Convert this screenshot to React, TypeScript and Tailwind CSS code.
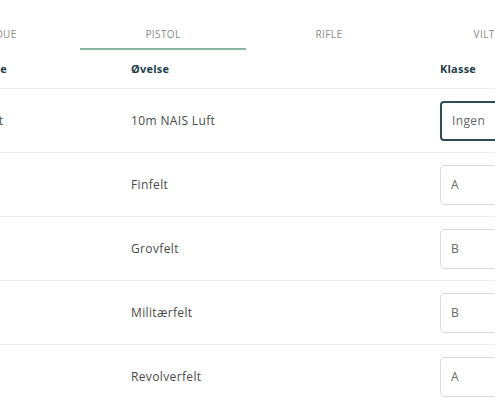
import React from 'react';

const tabs = ['Lerdue', 'Pistol', 'Rifle', 'Viltmål'];

const rows = [
  { group: 'Luft', name: '10m NAIS Luft', klasse: 'Ingen', focused: true },
  { group: '', name: 'Finfelt', klasse: 'A' },
  { group: '', name: 'Grovfelt', klasse: 'B' },
  { group: '', name: 'Militærfelt', klasse: 'B' },
  { group: '', name: 'Revolverfelt', klasse: 'A' },
];

export default function App() {
  return (
    <div className="w-[495px] h-[400px] overflow-hidden bg-white font-['Open_Sans',sans-serif]">
      <div className="-ml-[86px] w-[664px]">
        {/* Tabs */}
        <div className="grid grid-cols-4">
          {tabs.map((tab) => (
            <div
              key={tab}
              className={`pt-[28px] pb-[8px] text-center text-[10px] leading-[12px] uppercase tracking-[0.04em] text-[#8a8a8a] border-b-2 ${
                tab === 'Pistol' ? 'border-[#86b5a2]' : 'border-transparent'
              }`}
            >
              {tab}
            </div>
          ))}
        </div>

        {/* Table header */}
        <div className="grid grid-cols-[66px_151px_309px_1fr] h-[39px] items-center border-b border-[#ececec] text-[11px] font-bold text-[#1f3e4e] tracking-[0.02em]">
          <div />
          <div>Type</div>
          <div>Øvelse</div>
          <div>Klasse</div>
        </div>

        {/* Rows */}
        {rows.map((row) => (
          <div
            key={row.name}
            className="grid grid-cols-[66px_151px_309px_1fr] h-[64px] items-center border-b border-[#ececec] text-[12px] tracking-[0.03em] text-[#4a4a4a]"
          >
            <div />
            <div>{row.group}</div>
            <div>{row.name}</div>
            <div>
              <div
                className={`w-[120px] h-[40px] rounded-[4px] flex items-center pl-[10px] text-[12px] text-[#666] ${
                  row.focused ? 'border-2 border-[#2d4c56]' : 'border border-[#dcdcdc]'
                }`}
              >
                {row.klasse}
              </div>
            </div>
          </div>
        ))}
      </div>
    </div>
  );
}
